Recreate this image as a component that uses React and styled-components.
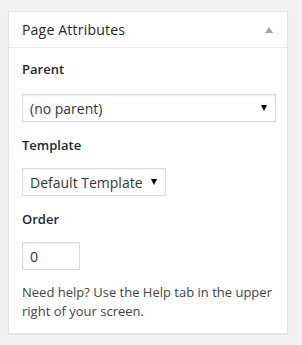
import React from 'react';
import styled, { createGlobalStyle } from 'styled-components';

const GlobalStyle = createGlobalStyle`
  html, body {
    margin: 0;
    padding: 0;
    background: #f1f1f1;
  }
  body {
    font-family: "Open Sans", "Noto Sans", sans-serif;
    color: #444;
  }
`;

const Page = styled.div`
  padding: 11px 14px 10px 8px;
`;

const Postbox = styled.div`
  width: 278px;
  background: #fff;
  border: 1px solid #e5e5e5;
  box-shadow: 0 1px 1px rgba(0, 0, 0, 0.04);
`;

const Handle = styled.div`
  display: flex;
  align-items: center;
  justify-content: space-between;
  height: 36px;
  padding: 0 13px;
  border-bottom: 1px solid #eee;
  box-sizing: border-box;
`;

const Title = styled.h2`
  margin: 0;
  font-size: 14px;
  font-weight: 400;
  letter-spacing: 0.2px;
  line-height: 20px;
  color: #23282d;
`;

const Toggle = styled.span`
  width: 0;
  height: 0;
  margin-right: 1px;
  border-left: 4px solid transparent;
  border-right: 4px solid transparent;
  border-bottom: 6px solid #a0a5aa;
`;

const Inside = styled.div`
  padding: 13px 11px 12px 13px;
`;

const Label = styled.p`
  margin: ${(p) => (p.first ? '-2px 0 15px' : '13px 0 13px')};
  font-size: 13px;
  font-weight: 600;
  line-height: 20px;
  color: #23282d;
`;

const Select = styled.div`
  display: flex;
  align-items: center;
  justify-content: space-between;
  box-sizing: border-box;
  width: ${(p) => p.width}px;
  height: 28px;
  padding: 0 8px 0 7px;
  border: 1px solid #ddd;
  box-shadow: inset 0 1px 2px rgba(0, 0, 0, 0.07);
  font-size: 14px;
  color: #32373c;
`;

const Arrow = styled.span`
  width: 0;
  height: 0;
  border-left: 3px solid transparent;
  border-right: 3px solid transparent;
  border-top: 6px solid #000;
`;

const NumberInput = styled.div`
  display: flex;
  align-items: center;
  box-sizing: border-box;
  width: 58px;
  height: 28px;
  padding: 0 7px;
  border: 1px solid #ddd;
  box-shadow: inset 0 1px 2px rgba(0, 0, 0, 0.07);
  font-size: 14px;
  color: #32373c;
`;

const Help = styled.p`
  margin: 13px 0 0;
  font-size: 13px;
  line-height: 19px;
  color: #444;
`;

const App = () => (
  <Page>
    <GlobalStyle />
    <Postbox>
      <Handle>
        <Title>Page Attributes</Title>
        <Toggle />
      </Handle>
      <Inside>
        <Label first>Parent</Label>
        <Select width={254}>
          <span>(no parent)</span>
          <Arrow />
        </Select>
        <Label>Template</Label>
        <Select width={144}>
          <span>Default Template</span>
          <Arrow />
        </Select>
        <Label>Order</Label>
        <NumberInput>0</NumberInput>
        <Help>Need help? Use the Help tab in the upper right of your screen.</Help>
      </Inside>
    </Postbox>
  </Page>
);

export default App;
